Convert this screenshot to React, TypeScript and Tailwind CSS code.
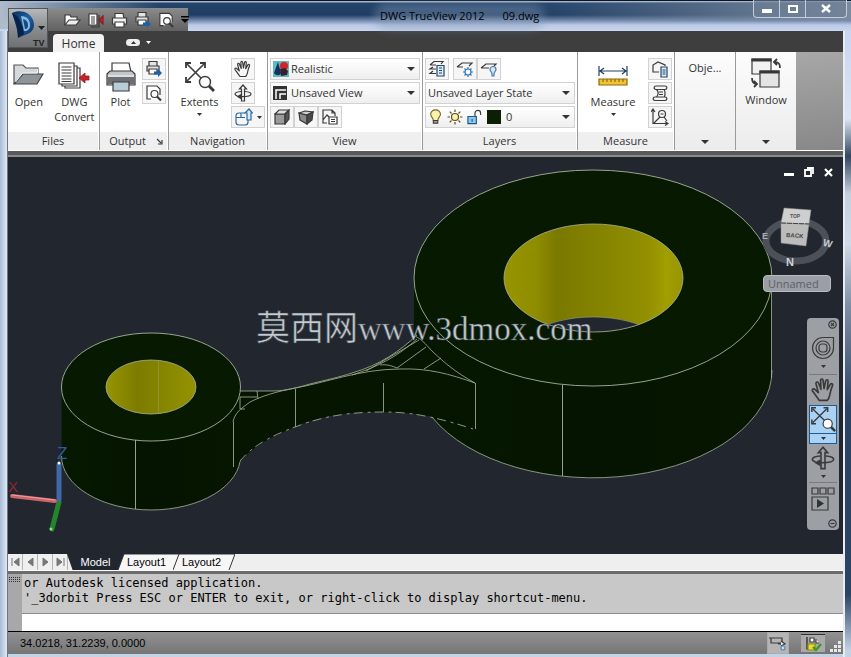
import React, { useState } from "react";
import clsx from "clsx";

type IconProps = {
  w?: number;
  h?: number;
  box?: string;
  children: React.ReactNode;
};

const Icon: React.FC<IconProps> = ({ w = 18, h = 18, box = "0 0 18 18", children }) => (
  <svg
    width={w}
    height={h}
    viewBox={box}
    fill="none"
    stroke="#3a3a3a"
    strokeWidth="1.2"
    className="block shrink-0"
    aria-hidden="true"
  >
    {children}
  </svg>
);

/* ---------- Icons ---------- */

const FolderShape = () => (
  <>
    <path d="M1 22V3h9l3 3h12v6" fill="#d6d9dc" stroke="#555" />
    <path d="M1 22 10 12h20l-6 10Z" fill="#8f9498" stroke="#444" />
    <path d="M2.500 20 9.500 11h15V7" stroke="#f4f4f4" strokeWidth="1" />
  </>
);

const SheetsShape = () => (
  <>
    <path d="M7 6h15v20H7z" fill="#fff" />
    <path d="M4 4h15v20H4z" fill="#fff" />
    <path d="M1 1h15v21H1z" fill="#fff" />
    <path d="M3.500 5h10M3.500 8h10M3.500 11h10M3.500 14h10M3.500 17h10M3.500 19.500h10" />
    <path d="M21 16l6-5v3h4v4h-4v3Z" fill="#c8232b" stroke="#8c1b20" strokeWidth="0.8" />
  </>
);

const PrinterShape = () => (
  <>
    <path d="M6 10V1h17l2 9" fill="#fff" />
    <path d="M1 12l3-3h22l3 3v11H1Z" fill="#c3c6c9" />
    <path d="M1 15h28v7H1z" fill="#6c7074" stroke="none" />
    <path d="M2 14h26" stroke="#eee" />
    <path d="M7 20h16v9H7z" fill="#b9cdd8" />
  </>
);

const ExtentsShape = () => (
  <>
    <path d="M2 2l17 17M19 2 2 19" strokeWidth="1.600" />
    <path d="M1 6V1h5M15 1h5v5M1 15v5h5" strokeWidth="1.800" />
    <circle cx="20" cy="20" r="5.500" fill="#fff" strokeWidth="1.400" />
    <path d="m24 24 5 5" strokeWidth="3" />
  </>
);

const HandShape = () => (
  <path
    d="M6 16.500C4 13.500 2 11 1 9.500c-.5-1 .9-1.900 2-.8l2.300 2.200L3.600 4.500c-.3-1.300 1.400-1.700 1.800-.5L7.200 8.500 6.900 2.200c0-1.300 1.700-1.300 1.800 0L9.400 8l1.200-5.600c.3-1.200 1.900-.9 1.700.4L11.700 8.700l2.200-3.800c.7-1 2-.3 1.600.8-1.200 3-1.700 5-2.100 7.300-.3 1.600-.9 2.600-1.700 3.500Z"
    fill="none"
    strokeLinejoin="round"
  />
);

const OrbitShape = () => (
  <>
    <path d="M7.500 17V5H5.500L9 1l3.500 4h-2v12Z" />
    <path d="M7 7.500C3 7.800 1 8.800 1 10c0 .9 1 1.600 2.500 2M11 7.500c4 .3 6 1.300 6 2.500 0 1.600-3.500 2.600-9 2.600H6" />
    <path d="M7 10v5.200l-4.500-2.700z" fill="#3a3a3a" stroke="none" />
  </>
);

const MagnifySheet = () => (
  <>
    <path d="M6 15H2V2h10l3 3v6" fill="#fff" />
    <circle cx="9.500" cy="10" r="3.500" fill="#fff" />
    <path d="m12 12.500 4 4" strokeWidth="2.200" />
  </>
);

const PrintArrow = () => (
  <>
    <path d="M4 6V1.500h8V6M2 6h12v5H2z" fill="#e4e4e4" />
    <path d="M4 9h8v5H4z" fill="#fff" />
    <path d="M9 11.500h4V9l4 4-4 4v-2.500H9Z" fill="#1f5fa8" stroke="none" />
  </>
);

const Caret: React.FC<{ className?: string }> = ({ className }) => (
  <svg width="8" height="4" viewBox="0 0 8 4" className={clsx("block shrink-0", className)} aria-hidden="true">
    <path d="M0 0h8L4 4z" fill="currentColor" />
  </svg>
);

const SmallCaret: React.FC<{ className?: string }> = ({ className }) => (
  <svg width="5" height="3" viewBox="0 0 5 3" className={clsx("block shrink-0", className)} aria-hidden="true">
    <path d="M0 0h5L2.500 3z" fill="currentColor" />
  </svg>
);

/* ---------- Ribbon building blocks ---------- */

const ToolButton: React.FC<{ label: string; wide?: boolean; children: React.ReactNode }> = ({
  label,
  wide,
  children,
}) => (
  <button
    aria-label={label}
    className={clsx(
      "flex h-[22px] items-center justify-center gap-1 border border-[#d2d2d2] bg-[#f6f6f6] hover:bg-sky-100",
      wide ? "w-[34px]" : "w-6"
    )}
  >
    {children}
  </button>
);

const BigButton: React.FC<{ label: string; className?: string; children: React.ReactNode; caret?: boolean }> = ({
  label,
  className,
  children,
  caret,
}) => (
  <button className={clsx("flex flex-col items-center self-start pt-1 leading-[15px]", className)}>
    <span className="flex h-8 items-start justify-center">{children}</span>
    {label}
    {caret && <SmallCaret className="mt-1" />}
  </button>
);

const Panel: React.FC<{ title: string; className: string; children: React.ReactNode; launcher?: boolean }> = ({
  title,
  className,
  children,
  launcher,
}) => (
  <section className={clsx("flex shrink-0 flex-col border-r border-[#9a9a9a] bg-white", className)}>
    <div className="flex min-h-0 flex-1 justify-between pt-1.5">{children}</div>
    <h2
      className={clsx(
        "relative h-[18px] border-r border-white bg-[#efefef] text-center leading-[17px]",
        launcher && "pr-3"
      )}
    >
      {title}
      {launcher && (
        <button aria-label="Plot options" className="absolute right-1 top-1.5">
          <Icon w={7} h={7} box="0 0 7 7">
            <path d="m1 1 4 4M6 2v4H2" />
          </Icon>
        </button>
      )}
    </h2>
  </section>
);

const Combo: React.FC<{
  label: string;
  options: string[];
  pad: string;
  children?: React.ReactNode;
}> = ({ label, options, pad, children }) => (
  <div className="relative h-[22px] border border-[#d2d2d2] bg-gradient-to-b from-white to-[#efefef]">
    <div className="pointer-events-none absolute inset-y-0 left-0.5 flex items-center gap-0.5">{children}</div>
    <select aria-label={label} className={clsx("h-full w-full appearance-none bg-transparent outline-none", pad)}>
      {options.map((o) => (
        <option key={o}>{o}</option>
      ))}
    </select>
    <Caret className="pointer-events-none absolute right-1 top-2" />
  </div>
);

/* ---------- Title bar ---------- */

const TitleBar = () => (
  <header className="relative flex h-[31px] shrink-0 bg-[linear-gradient(to_bottom,#0b1526_0px,#0b1526_1px,#a5b5ca_1px,#a5b5ca_2px,#24446b_3px,#1f3d63_15px,#6d84a8_20px,#bccae6_25px,#c9d6f2_31px)] pl-[47px]">
    <div className="absolute inset-y-0.5 left-0 w-40 bg-gradient-to-r from-[#aebbcb] to-transparent" />
    <div className="absolute right-0 top-0.5 h-[18px] w-80 bg-gradient-to-l from-[#7b8b9f] to-transparent" />
    <div className="relative mt-2 flex h-[23px] w-[141px] items-center gap-1.5 bg-gradient-to-b from-[#8b8b8b] to-[#616161] pl-4 pr-1">
      <button aria-label="Open">
        <Icon box="0 0 18 18">
          <path d="M2 14V4h5l1 2h6v3" fill="#fff" />
          <path d="m2 14 4-5h11l-4 5Z" fill="#eee" />
        </Icon>
      </button>
      <button aria-label="DWG Convert">
        <Icon box="0 0 18 18">
          <path d="M2 3h8v11H2z" fill="#fff" />
          <path d="M4 6h4M4 8h4M4 10h4M4 12h4M12 4v12H4" />
          <path d="m12 9 4-4v8Z" fill="#c8232b" stroke="#8c1b20" />
        </Icon>
      </button>
      <button aria-label="Plot">
        <Icon w={17} h={16} box="0 0 17 16">
          <path d="M4 6V1.500h8L13 6" fill="#fff" />
          <path d="M1.500 6h14v6h-14z" fill="#f2f2f2" />
          <path d="M4 10h9v5H4z" fill="#fff" />
        </Icon>
      </button>
      <button aria-label="Batch Plot">
        <Icon>
          <PrintArrow />
        </Icon>
      </button>
      <button aria-label="Plot Preview">
        <Icon w={17}>
          <MagnifySheet />
        </Icon>
      </button>
      <button aria-label="Customize" className="text-black">
        <svg width="8" height="7" viewBox="0 0 8 7" fill="currentColor" className="block">
          <path d="M0 0h8v1.500H0zM0 3h8L4 7z" />
        </svg>
      </button>
    </div>
    <h1 className="absolute left-[380px] top-2 flex gap-[18px] rounded-full bg-[#7f95b3]/40 leading-4 text-black shadow-[0_0_8px_6px_rgba(127,149,179,0.4)]">
      <span>DWG TrueView 2012</span>
      <span>09.dwg</span>
    </h1>
    <div className="absolute right-1 top-0 flex h-[18px] divide-x divide-[#c3ccd8] rounded-b border border-t-0 border-[#c3ccd8] bg-[#6e7f96]/60">
      <button aria-label="Minimize" className="flex w-[26px] items-center justify-center">
        <span className="mt-1 h-1 w-2.5 bg-white" />
      </button>
      <button aria-label="Maximize" className="flex w-[26px] items-center justify-center">
        <span className="h-2 w-2.5 border-2 border-white" />
      </button>
      <button aria-label="Close" className="flex w-10 items-center justify-center">
        <Icon w={10} h={9} box="0 0 10 9">
          <path d="m1 1 8 7M9 1 1 8" stroke="#fff" strokeWidth="2.400" />
        </Icon>
      </button>
    </div>
  </header>
);

const AppButton = () => (
  <button
    aria-label="Application menu"
    className="absolute left-2 top-2 z-10 h-10 w-10 border border-[#555] bg-gradient-to-b from-[#b5b9bb] via-[#8b8e90] to-[#6f7173]"
  >
    <svg width="38" height="38" viewBox="0 0 38 38">
      <defs>
        <linearGradient id="dlogo" x1="0" y1="0" x2="1" y2="1">
          <stop offset="0" stopColor="#0a2f60" />
          <stop offset="0.500" stopColor="#1f5f9e" />
          <stop offset="1" stopColor="#0a2c58" />
        </linearGradient>
      </defs>
      <path d="M3 4c8-4 18-1 21 7 3 8-1 13-8 15l-7 3c1-3 0-6-1-9Z" fill="url(#dlogo)" />
      <path d="M3 4c2 5 4 10 5 16l1 9 6-4c-1-8-3-13-7-18Z" fill="#06244a" />
      <path d="M12 7c6 0 9 4 9 9 0 4-2 6-6 6-1-5-2-10-3-15Z" fill="#86bbe4" />
      <path d="M14 10c4 1 5 4 5 6 0 3-1 4-3 4Z" fill="#174a80" />
      <path d="M29 17h7l-3.500 4z" fill="#222" />
      <text x="24" y="37" fontSize="9" fontWeight="bold" fill="#222" fontFamily="Liberation Sans, sans-serif">
        TV
      </text>
    </svg>
  </button>
);

/* ---------- Ribbon ---------- */

const Ribbon = () => (
  <div className="flex h-[98px] shrink-0 bg-gradient-to-br from-[#c4c4c4] to-[#888888]">
    <Panel title="Files" className="w-[92px]">
      <BigButton label="Open" className="w-11">
        <Icon w={31} h={25} box="0 0 31 25">
          <FolderShape />
        </Icon>
      </BigButton>
      <BigButton label="DWG Convert" className="w-[52px]">
        <Icon w={32} h={28} box="0 0 32 28">
          <SheetsShape />
        </Icon>
      </BigButton>
    </Panel>

    <Panel title="Output" className="w-[69px]" launcher>
      <BigButton label="Plot" className="w-[41px]">
        <Icon w={30} h={30} box="0 0 30 30">
          <PrinterShape />
        </Icon>
      </BigButton>
      <div className="flex flex-col gap-0.5 pr-0.5">
        <ToolButton label="Batch Plot">
          <Icon>
            <PrintArrow />
          </Icon>
        </ToolButton>
        <ToolButton label="Preview">
          <Icon>
            <MagnifySheet />
          </Icon>
        </ToolButton>
      </div>
    </Panel>

    <Panel title="Navigation" className="w-[99px]">
      <BigButton label="Extents" className="w-[61px]" caret>
        <Icon w={30} h={30} box="0 0 30 30">
          <ExtentsShape />
        </Icon>
      </BigButton>
      <div className="flex flex-col gap-0.5 pr-0.5">
        <ToolButton label="Pan">
          <Icon>
            <HandShape />
          </Icon>
        </ToolButton>
        <ToolButton label="Orbit">
          <Icon>
            <OrbitShape />
          </Icon>
        </ToolButton>
        <ToolButton label="Constrained view" wide>
          <Icon>
            <path d="M10 5H4C2 5 1 6 1 8v6c0 2 1 3 3 3h6c2 0 3-1 3-3v-2M1 9.500h9M6 5v4.500" stroke="#2e6a9e" />
            <path d="M12 12V5h-2l4-4 3.500 4H16v7Z" fill="#d7ebf9" stroke="#2e6a9e" />
          </Icon>
          <SmallCaret />
        </ToolButton>
      </div>
    </Panel>

    <Panel title="View" className="w-[155px]">
      <div className="flex w-full flex-col gap-0.5 px-0.5">
        <Combo label="Visual style" options={["Realistic", "Wireframe", "Hidden"]} pad="pl-5">
          <Icon w={16} h={16} box="0 0 16 16">
            <path d="M0 0h16v16H0z" fill="#5fb9bd" stroke="none" />
            <path d="M5 1 1 12c2 3 6 3 7 0Z" fill="#16305f" stroke="none" />
            <circle cx="11" cy="5" r="4" fill="#d2232a" stroke="none" />
            <path d="m7 8 5-1 3 3-1 4-6 1Z" fill="#33222e" stroke="none" />
          </Icon>
        </Combo>
        <Combo label="Named view" options={["Unsaved View", "Top", "Front"]} pad="pl-5">
          <Icon w={14} h={14} box="0 0 14 14">
            <path d="M0 0h14v14H0z" fill="#333" stroke="none" />
            <path d="M3 13V4h10M7 13V8h6" stroke="#fff" strokeWidth="1.500" />
          </Icon>
        </Combo>
        <div className="flex">
          <ToolButton label="Parallel">
            <Icon w={16} h={16} box="0 0 16 16">
              <path d="M1 5h10v10H1z" fill="#9a9a9a" />
              <path d="m1 5 4-4h10l-4 4Z" fill="#dedede" />
              <path d="m11 5 4-4v9l-4 5Z" fill="#555" />
            </Icon>
          </ToolButton>
          <ToolButton label="Perspective">
            <Icon w={16} h={16} box="0 0 16 16">
              <path d="m1 4 8 2v9l-7-4Z" fill="#8a8a8a" />
              <path d="m1 4 6-2 8 1-6 3Z" fill="#cfcfcf" />
              <path d="m9 6 6-3-1 8-5 4Z" fill="#4a4a4a" />
            </Icon>
          </ToolButton>
          <ToolButton label="View manager">
            <Icon>
              <path d="M6 15H2V2h9l3 3v3M11 2v3h3M2 12l4-5 2 2" />
              <path d="M8 9h8v7H8z" fill="#fff" />
              <path d="M10 11.500h4M10 13.500h4" />
            </Icon>
          </ToolButton>
        </div>
      </div>
    </Panel>

    <Panel title="Layers" className="w-[155px]">
      <div className="flex w-full flex-col gap-0.5 px-0.5">
        <div className="flex gap-1">
          <ToolButton label="Layer properties">
            <Icon>
              <path d="m2 5 4-3.500h9L13 4M2 5h6M5 7 2 9h6M5 11l-3 2.500h6" />
              <path d="M9 5.500h7V16H9z" fill="#dcebf7" stroke="#24496b" />
              <path d="M11 8h3M11 10.500h3M11 13h3" stroke="#24496b" />
            </Icon>
          </ToolButton>
          <div className="flex">
            <ToolButton label="Freeze">
              <Icon>
                <path d="m1 7 5-4h10l-3 3M1 7h6" />
                <circle cx="12" cy="12" r="3" stroke="#3178b5" />
                <path
                  d="M12 7v2M12 15v2M7 12h2M15 12h2M8.500 8.500l1.500 1.500M14 14l1.500 1.500M15.500 8.500 14 10M10 14l-1.500 1.500"
                  stroke="#3178b5"
                />
              </Icon>
            </ToolButton>
            <ToolButton label="Turn off">
              <Icon>
                <path d="m1 8 5-4h10l-2 2M1 8h8" />
                <path d="M12 14c0-2-2-2.500-2-4.500a3 3 0 0 1 6 0c0 2-2 2.500-2 4.500v2h-2Z" fill="#cfe4f6" stroke="#4a7ba8" />
              </Icon>
            </ToolButton>
          </div>
        </div>
        <Combo label="Layer state" options={["Unsaved Layer State"]} pad="pl-0.5" />
        <Combo label="Layer" options={["0"]} pad="pl-[80px]">
          <Icon w={16}>
            <path d="M6 13c0-3-3-4-3-7a5.500 5 0 0 1 11 0c0 3-3 4-3 7Z" fill="#fdf0a8" stroke="#6b6330" />
            <path d="M6 13h5v3H6z" fill="#999" />
          </Icon>
          <Icon>
            <circle cx="9" cy="9" r="3.500" fill="#fdf0a8" stroke="#5d5220" />
            <path
              d="M9 1.500V4M9 14v2.500M1.500 9H4M14 9h2.500M3.700 3.700l1.800 1.800M12.500 12.500l1.800 1.800M14.300 3.700l-1.800 1.800M5.500 12.500l-1.800 1.800"
              stroke="#5d5220"
            />
          </Icon>
          <Icon w={17}>
            <path d="M2 8.500h9V16H2z" fill="#8fc6ec" stroke="#1c5a8c" />
            <path d="M9.500 8V5c0-4 6-4 6 0v2" />
            <path d="M6.500 11v3" stroke="#1c5a8c" />
          </Icon>
          <span className="ml-0.5 size-3.5 bg-[#0c1f04]" />
        </Combo>
      </div>
    </Panel>

    <Panel title="Measure" className="w-[97px]">
      <BigButton label="Measure" className="w-[70px]" caret>
        <Icon w={30} h={30} box="0 0 30 30">
          <path d="M1 4v10M29 4v10M3 9h24M6 6 2 9l4 3M24 6l4 3-4 3" stroke="#24405f" />
          <path d="M1 17h28v6H1z" fill="#f4c430" stroke="#8a6a10" />
          <path d="M5 17v3M9 17v3M13 17v3M17 17v3M21 17v3M25 17v3" stroke="#8a6a10" />
        </Icon>
      </BigButton>
      <div className="flex flex-col gap-0.5 pr-0.5">
        <ToolButton label="List">
          <Icon>
            <path d="M8 12H2V5l5-3 7 3v1" />
            <path d="M10 7h6v10h-6z" fill="#dcebf7" stroke="#24496b" />
            <path d="M11.500 10h3M11.500 12h3M11.500 14h3" stroke="#24496b" />
          </Icon>
        </ToolButton>
        <ToolButton label="Locate">
          <Icon>
            <path d="M5 2h9c2.500 0 2.500 3.500 0 3.500H5C2.500 5.500 2.500 2 5 2ZM5.500 5.500c2 2 2 5 0 7.500M13 5.500c1.500 2 1 5.500.5 7.500M8 8h4M8 10.500h4M4 13h10c2.500 0 2.500 3.500 0 3.500H4c-2.500 0-2.500-3.500 0-3.500Z" />
          </Icon>
        </ToolButton>
        <ToolButton label="ID Point">
          <Icon>
            <path d="M2 2v13.500h14M0 4l2-3 2 3M14 13.500l3 2-3 2M3 15l6-6" />
            <circle cx="11" cy="6" r="3.500" />
            <path d="M13 9l3 4M9.500 6h3" />
          </Icon>
        </ToolButton>
      </div>
    </Panel>

    <button className="flex w-[61px] shrink-0 flex-col items-center justify-between border-r border-[#9a9a9a] bg-gradient-to-b from-[#fcfcfc] to-[#ececec] pb-1.5 pt-2">
      Obje...
      <Caret />
    </button>
    <button className="flex w-[60px] shrink-0 flex-col items-center bg-gradient-to-b from-[#fcfcfc] to-[#ececec] pb-1.5 pt-1.5">
      <Icon w={30} h={30} box="0 0 30 30">
        <path d="M1 1h19v15H1z" fill="#f2f2f2" />
        <path d="M1 1h19v2H1z" fill="#333" />
        <path d="M9 13h19v16H9z" fill="#e4e4e4" />
        <path d="M9 13h19v2H9z" fill="#333" />
        <path d="M29 10c0-4-1-6-6-6M26 1l-3 3 3 3M1 20c0 4 1 6 5 6M3 23l3 3-3 3" strokeWidth="1.800" />
      </Icon>
      <span className="mt-1 flex-1">Window</span>
      <Caret />
    </button>
  </div>
);

/* ---------- Drawing ---------- */

const Model = () => (
  <svg
    viewBox="8 157 835 397"
    preserveAspectRatio="xMidYMid slice"
    className="block h-full w-full"
    role="img"
    aria-label="Connecting rod model"
  >
    <defs>
      <linearGradient id="boreBig">
        <stop offset="0" stopColor="#989500" />
        <stop offset="0.180" stopColor="#8f8d00" />
        <stop offset="0.300" stopColor="#7a7900" />
        <stop offset="0.500" stopColor="#838200" />
        <stop offset="0.800" stopColor="#929000" />
        <stop offset="0.900" stopColor="#a19e00" />
        <stop offset="1" stopColor="#979500" />
      </linearGradient>
      <linearGradient id="boreSmall">
        <stop offset="0" stopColor="#979500" />
        <stop offset="0.350" stopColor="#7d7c00" />
        <stop offset="0.600" stopColor="#858400" />
        <stop offset="1" stopColor="#959300" />
      </linearGradient>
      <linearGradient id="side">
        <stop offset="0" stopColor="#071800" />
        <stop offset="0.500" stopColor="#041400" />
        <stop offset="1" stopColor="#061600" />
      </linearGradient>
      <clipPath id="boreClip">
        <ellipse cx="593.500" cy="278" rx="89.500" ry="54" />
      </clipPath>
    </defs>

    {/* big end */}
    <path d="M414 278v92a179 108 0 0 0 358 0v-92Z" fill="url(#side)" />
    <path d="M432 417a179 108 0 0 0 340-47M771.500 278v100" fill="none" stroke="#a7b39c" strokeWidth="0.800" />
    <ellipse cx="593" cy="278" rx="179" ry="108" fill="#071900" stroke="#a7b39c" strokeWidth="0.900" />
    <g clipPath="url(#boreClip)">
      <path d="M503 223h181v110H503z" fill="url(#boreBig)" />
      <ellipse cx="593" cy="371" rx="89.500" ry="54" fill="#21262f" stroke="#a7b39c" strokeWidth="0.500" />
    </g>
    <ellipse cx="593.500" cy="278" rx="89.500" ry="54" fill="none" stroke="#a7b39c" strokeWidth="0.800" />
    <path d="M562.500 385v91" stroke="#a7b39c" strokeWidth="0.900" />

    {/* small end */}
    <path d="M61.500 387v69a89.500 54 0 0 0 179 0v-69Z" fill="url(#side)" />
    <path d="M61.500 456a89.500 54 0 0 0 179 0" fill="none" stroke="#a7b39c" strokeWidth="0.800" />

    {/* connecting arm */}
    <path
      d="M233 391h37c12 0 20-1 40-7 16-4 30-7 42-11 28-8 48-22 63-35h7l53 45v47c-15-7-30-13-47-14-15-3-30-4-45-4-30 0-60 2-88 15-20 8-40 18-55 34l-7 6Z"
      fill="#051500"
    />
    <g fill="none" stroke="#98a58c" strokeWidth="0.900">
      <path d="M240 391h30c12 0 20-1 40-7 16-4 30-7 42-11 28-8 48-22 65-38" />
      <path d="M233 422c2-9 6-12 17-20 12-6 25-10 45-14 30-5 65-19 105-19 28-1 50 5 75 14" />
      <path d="M415 336c8 4 13 11 18 16 12 11 22 20 42 31" />
      <path d="m366 371 53-31M380 365c7-1 12 1 17 3l29-21M424 369l17-11M352 375c25-8 45-18 65-36" />
      <path d="M240 397h17M257 391l1 8M240 409h5M240 397v12" />
      <path d="M295.500 389v38M383.500 383v29M475.500 383v46M233.500 422v45" />
      <path d="M240 461c10-12 25-23 55-34 28-11 55-15 88-15 20 0 45 2 90 17" strokeDasharray="9 5 3 4" />
    </g>

    <ellipse cx="151" cy="387" rx="89.500" ry="54" fill="#071900" stroke="#a7b39c" strokeWidth="0.900" />
    <ellipse cx="151" cy="387" rx="45" ry="27" fill="url(#boreSmall)" stroke="#a7b39c" strokeWidth="0.800" />
    <path d="M158.500 361v53" stroke="#98a060" strokeWidth="0.500" />
    <path d="M135.500 440v69" stroke="#a7b39c" strokeWidth="0.900" />

    {/* UCS tripod */}
    <g strokeLinecap="round">
      <path d="m59 502-7 27" stroke="#23862b" strokeWidth="5" />
      <path d="M59 465v34" stroke="#4068a8" strokeWidth="5" />
      <path d="m12 496 43 5" stroke="#cf6468" strokeWidth="4" />
      <path d="m12 495 43 5" stroke="#e8a0a0" strokeWidth="1" />
      <circle cx="59" cy="463" r="1.500" fill="#fff" />
      <circle cx="51" cy="529" r="1.500" fill="#8ee08e" />
    </g>
    <g fontFamily="Liberation Sans, sans-serif" fontSize="17">
      <text x="57" y="459" fill="#2c5c9c">Z</text>
      <text x="8" y="492" fill="#8c2a2c" fontSize="15">X</text>
    </g>

    {/* site watermark */}
    <g fill="#c4cad0" stroke="#39424a" strokeWidth="0.600">
      <text x="256" y="340" fontSize="34" fontFamily="Noto Sans CJK SC, sans-serif">莫西网</text>
      <text x="358" y="340" fontSize="33" fontFamily="Liberation Serif, serif">www.3dmox.com</text>
    </g>
  </svg>
);

const ViewCube = () => (
  <div className="absolute right-2 top-10 flex w-20 flex-col items-end">
    <svg width="80" height="74" viewBox="756 197 80 74" role="img" aria-label="View cube">
      <ellipse cx="797" cy="241" rx="30" ry="20" fill="none" stroke="#4b5059" strokeWidth="7" />
      <path d="m785 208 27 2-2 14-28-1Z" fill="#cfcfcf" stroke="#8d8d8d" strokeWidth="0.500" />
      <path d="m782 223 28 1-3 22-25-3Z" fill="#bcbcbc" stroke="#8d8d8d" strokeWidth="0.500" />
      <path d="m782 223 28 1" stroke="#444" strokeDasharray="5 1" />
      <g fontFamily="Liberation Sans, sans-serif" fontWeight="bold">
        <text x="787" y="237" fontSize="6" fill="#444" transform="rotate(4 787 237)">BACK</text>
        <text x="791" y="218" fontSize="5" fill="#555">TOP</text>
        <text x="787" y="266" fontSize="11" fill="#d0d3d6">N</text>
        <text x="763" y="239" fontSize="9" fill="#a9adb2">E</text>
        <text x="824" y="247" fontSize="10" fill="#c8cbce" transform="rotate(15 829 243)">W</text>
      </g>
    </svg>
    <button className="mr-1 mt-1 h-[17px] w-[68px] rounded border border-[#b7bac0] bg-[#9b9ea5] pl-1 text-left leading-[14px] text-[#5d6068]">
      Unnamed
    </button>
  </div>
);

const NavBar = () => (
  <nav className="absolute right-1 top-[161px] flex w-8 flex-col items-center rounded bg-[#9c9fa3] text-[#2e3338]">
    <button aria-label="Close navigation bar" className="mr-0.5 mt-0.5 self-end">
      <Icon w={9} h={9} box="0 0 9 9">
        <circle cx="4.500" cy="4.500" r="3.700" />
        <path d="m3 3 3 3M6 3 3 6" />
      </Icon>
    </button>
    <button aria-label="Steering wheel" className="mt-[7px] flex h-[38px] flex-col items-center justify-between">
      <Icon w={24} h={24} box="0 0 24 24">
        <path d="M12 1.500h10.500V12A10.500 10.500 0 1 1 12 1.500Z" />
        <circle cx="12" cy="12" r="7" />
        <rect x="8" y="8" width="8" height="8" rx="3" />
      </Icon>
      <SmallCaret className="mb-1.5" />
    </button>
    <span className="h-px w-7 bg-[#777a7f]" />
    <button aria-label="Pan" className="py-0.5">
      <Icon w={25} h={26}>
        <HandShape />
      </Icon>
    </button>
    <button aria-label="Zoom extents" className="flex w-7 flex-col items-center border border-[#1f5c94] bg-[#a9d2f5]">
      <span className="flex h-7 w-full items-center justify-center border-b border-[#1f5c94]">
        <Icon w={25} h={25} box="0 0 30 30">
          <ExtentsShape />
        </Icon>
      </span>
      <SmallCaret className="my-[3px]" />
    </button>
    <button aria-label="Orbit" className="flex h-[38px] flex-col items-center justify-between pb-1 pt-0.5">
      <Icon w={24} h={24}>
        <OrbitShape />
      </Icon>
      <SmallCaret />
    </button>
    <span className="h-px w-7 bg-[#777a7f]" />
    <button aria-label="ShowMotion" className="mt-1">
      <Icon w={24} h={25} box="0 0 24 25">
        <path d="M1 1h6v6H1zM9 1h6v6H9zM17 1h6v6h-6zM1 10h16v13H1z" />
        <path d="m6 12 7 4.500L6 21Z" fill="#2e3338" stroke="none" />
      </Icon>
    </button>
    <button aria-label="Navigation bar options" className="mb-0.5 mr-0.5 mt-[7px] self-end">
      <Icon w={9} h={9} box="0 0 9 9">
        <circle cx="4.500" cy="4.500" r="3.700" />
        <path d="M2.500 4.500h4" />
      </Icon>
    </button>
  </nav>
);

const DrawingArea = () => (
  <main className="relative min-h-0 flex-1 overflow-hidden bg-[#21262f]">
    <div className="absolute inset-0">
      <Model />
    </div>
    <div className="absolute right-2.5 top-2.5 flex items-center gap-2.5">
      <button aria-label="Minimize drawing" className="mt-1 h-[3px] w-2.5 bg-white" />
      <button aria-label="Restore drawing">
        <Icon w={10} h={10} box="0 0 10 10">
          <path d="M1 3h6v6H1zM3 1h6v6" stroke="#fff" strokeWidth="1.800" />
        </Icon>
      </button>
      <button aria-label="Close drawing">
        <Icon w={9} h={9} box="0 0 9 9">
          <path d="m1 1 7 7M8 1 1 8" stroke="#fff" strokeWidth="2.200" />
        </Icon>
      </button>
    </div>
    <ViewCube />
    <NavBar />
  </main>
);

/* ---------- Layout tabs ---------- */

const scrollIcons = [
  { name: "First", d: "M2 1v8M9 1v8L4 5z" },
  { name: "Previous", d: "M8 1v8L3 5z" },
  { name: "Next", d: "M3 1v8l5-4z" },
  { name: "Last", d: "M2 1v8l5-4zM9 1v8" },
];

const LayoutTabs = () => {
  const [active, setActive] = useState("Model");
  const tabs = ["Model", "Layout1", "Layout2"];

  return (
    <div className="flex h-4 shrink-0 bg-[#efefef] font-['Liberation_Sans',sans-serif] text-black">
      {scrollIcons.map((s) => (
        <button
          key={s.name}
          aria-label={`${s.name} layout`}
          className="flex w-[15px] items-center justify-center border-r border-[#b5b5b5]"
        >
          <svg width="11" height="10" viewBox="0 0 11 10" fill="#777" stroke="#777">
            <path d={s.d} />
          </svg>
        </button>
      ))}
      {tabs.map((tab) => (
        <button
          key={tab}
          onClick={() => setActive(tab)}
          className="relative flex w-[55px] items-center justify-center leading-4 first-of-type:ml-0 nth-[5]:-mr-1"
        >
          <svg
            viewBox="0 0 62 16"
            preserveAspectRatio="none"
            className={clsx("absolute -left-px top-0 h-4", tab === active ? "w-[58px]" : "w-[62px]")}
          >
            {tab === active ? (
              <path d="M0 0h62l-6 16H6z" fill="#21262f" />
            ) : (
              <path d="M0 16 6 0h56l-6 16" fill="#f7f7f7" stroke="#333" />
            )}
          </svg>
          <span className={clsx("relative", tab === active && "text-white")}>{tab}</span>
        </button>
      ))}
    </div>
  );
};

/* ---------- Command line and status bar ---------- */

const CommandLine = () => (
  <div className="flex h-[58px] shrink-0 border-b border-black bg-[#a8a8a8]">
    <div className="w-3.5 shrink-0 pl-px pt-[3px]">
      <svg width="12" height="5" viewBox="0 0 12 5" stroke="#333" strokeDasharray="1 1" className="block">
        <path d="M0 .5h12M0 2.500h12M0 4.500h12" />
      </svg>
    </div>
    <div className="flex min-w-0 flex-1 flex-col bg-[#c8c8c8] font-['DejaVu_Sans_Mono',monospace] text-xs text-black">
      <div className="h-10 whitespace-pre border-b border-[#8f8f8f] pl-0.5 pt-0.5 leading-[15px]">
        <p>or Autodesk licensed application.</p>
        <p>'_3dorbit Press ESC or ENTER to exit, or right-click to display shortcut-menu.</p>
      </div>
      <input aria-label="Command" className="min-h-0 w-full flex-1 bg-white px-0.5 outline-none" />
    </div>
  </div>
);

const StatusBar = () => (
  <footer className="flex h-[22px] shrink-0 items-center bg-gradient-to-b from-[#929292] to-[#757575] pl-3 font-['Liberation_Sans',sans-serif] text-black">
    <span className="flex-1">34.0218, 31.2239, 0.0000</span>
    <button
      aria-label="Status bar menu"
      className="flex h-[22px] w-[22px] items-center justify-center border border-[#aaa] bg-[#b5b5b5]"
    >
      <Icon>
        <path d="M2 4h11v5H2zM0 4h2M9 10h5" />
        <path d="m12 7 4 3-4 2" fill="#eee" />
        <circle cx="14" cy="14" r="2" fill="#bfe0f5" stroke="#5c8bab" />
      </Icon>
    </button>
    <button
      aria-label="Trusted source"
      className="ml-3 flex h-[18px] w-6 items-center justify-center border-t border-[#333] bg-[#a9a9a9]"
    >
      <Icon>
        <path d="M3 2v12h5" stroke="#222" />
        <path d="M4 9h7v6H4z" fill="#e6e02a" stroke="#8d8a12" />
        <path d="M6 3h4v4H6zM12 4v4h3" fill="#fff" />
        <path d="m9 12 3 3 5-6" stroke="#3d9a1f" strokeWidth="2.200" />
      </Icon>
    </button>
    <svg width="14" height="14" viewBox="0 0 14 14" fill="#e8e8e8" className="ml-1 self-end">
      <path d="M9 1h3v3H9zM5 5h3v3H5zM9 5h3v3H9zM1 9h3v3H1zM5 9h3v3H5zM9 9h3v3H9z" />
    </svg>
  </footer>
);

export default function App() {
  return (
    <div className="relative flex h-screen flex-col overflow-hidden bg-[#c4d2e6] font-['Open_Sans',sans-serif] text-[11px] text-[#333]">
      <TitleBar />
      <AppButton />
      <div className="flex min-h-0 flex-1 bg-[linear-gradient(to_bottom,#c9d6f2_0%,#dce5f3_14%,#33465f_20%,#c5d0de_26%,#d0dae8_34%,#7e8ea3_44%,#2c4463_60%,#2c4463_90%,#c4d2e6_99%)]">
        <div className="w-2 shrink-0 border-r border-[#6b7684] bg-gradient-to-r from-[#a9bcd4] to-[#dfe9f5]" />
        <div className="mb-[3px] flex min-w-0 flex-1 flex-col">
          <div className="flex h-[21px] shrink-0 items-end bg-[#3e3e3e] pl-[45px]">
            <button className="h-[18px] w-[51px] rounded-t-sm bg-[#f3f3f3] text-xs leading-[17px]">Home</button>
            <button aria-label="Minimize ribbon" className="mb-1.5 ml-[22px] flex items-center gap-1.5 text-white">
              <span className="flex h-[7px] w-[14px] items-center justify-center rounded-sm bg-[#eee] text-[#333]">
                <SmallCaret className="rotate-180" />
              </span>
              <SmallCaret />
            </button>
          </div>
          <Ribbon />
          <div className="h-[7px] shrink-0 border-b-2 border-t border-b-[#8a8a8a] border-t-white bg-[#5a5a5a]" />
          <DrawingArea />
          <LayoutTabs />
          <div className="h-1 shrink-0 border-t border-white bg-[#6c6c6c]" />
          <CommandLine />
          <StatusBar />
        </div>
        <div className="w-2 shrink-0 border-l-2 border-[#e8edf3]" />
      </div>
    </div>
  );
}
